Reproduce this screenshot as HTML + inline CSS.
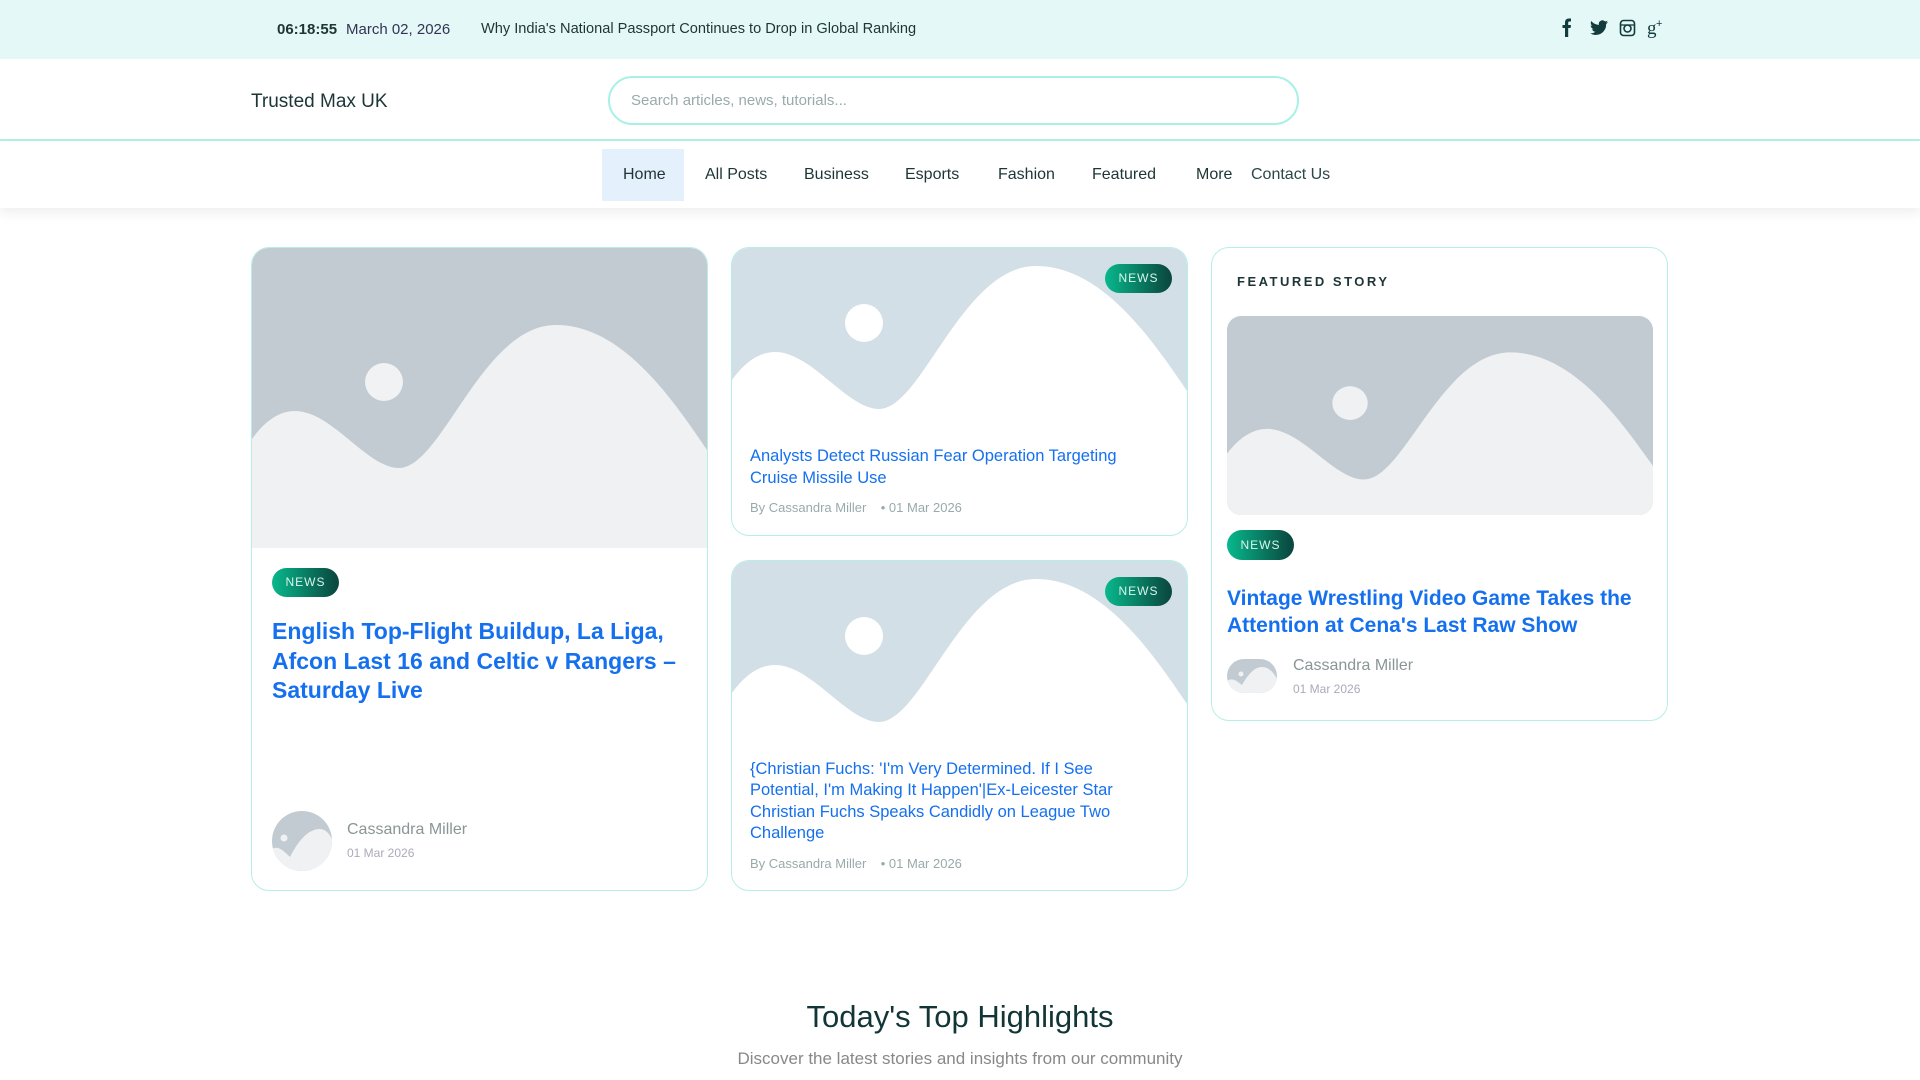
<!DOCTYPE html>
<html><head><meta charset="utf-8"><style>
*{box-sizing:border-box;margin:0;padding:0}
body{width:1920px;height:1080px;overflow:hidden;background:#fff;font-family:"Liberation Sans",sans-serif;color:#123;position:relative}
.a{position:absolute}
.top{left:0;top:0;width:1920px;height:59px;background:#e4f8f7}
.top span{position:absolute;top:21px;font-size:15px;color:#1e3535}
.hdr{top:59px;left:0;width:1920px;height:82px;border-bottom:2px solid #aef0e6}
.nav{top:142px;left:0;width:1920px;height:66px;background:#fff;box-shadow:0 6px 10px rgba(0,0,0,.06)}
.nav span{position:absolute;top:24px;font-size:16px;color:#1e3535}
.card{border:1.5px solid #b5efe6;border-radius:18px;overflow:hidden;background:#fff}
.pill{position:absolute;height:29px;width:67px;border-radius:15px;background:linear-gradient(90deg,#08b88c,#0a4a40 95%);color:#d8f5ee;font-size:12px;letter-spacing:1px;text-align:center;line-height:29px}
.t{position:absolute;color:#1570ef;font-weight:bold}
.meta{position:absolute;font-size:13px;color:#9aa}
</style></head><body>
<div class="a top">
<span style="left:277px;font-weight:bold">06:18:55</span>
<span style="left:346px;color:#335">March 02, 2026</span>
<span style="left:481px;font-size:14.6px">Why India's National Passport Continues to Drop in Global Ranking</span>
<svg class="a" style="left:1560px;top:17px" width="110" height="22" viewBox="0 0 110 22" fill="#123b3b">
<path d="M5 20V11H2.5V8H5V5.5C5 3 6.5 1.5 8.8 1.5H11V4.5H9.3C8.5 4.5 8.2 5 8.2 5.7V8H11L10.6 11H8.2V20Z"/>
<path d="M48 5c-.7.3-1.4.5-2.1.6.8-.5 1.3-1.2 1.6-2-.7.4-1.5.7-2.3.9a3.7 3.7 0 0 0-6.3 3.4c-3.1-.2-5.8-1.600-7.6-3.9-1 1.7-.5 3.8 1.1 4.9-.6 0-1.2-.2-1.7-.5 0 1.8 1.3 3.3 3 3.7-.5.2-1.1.2-1.7.1.5 1.5 1.9 2.5 3.5 2.6A7.4 7.4 0 0 1 30 16.3a10.5 10.5 0 0 0 16.2-9.3c.7-.5 1.3-1.2 1.8-2z"/>
<rect x="60.5" y="3.5" width="14" height="15" rx="3" fill="none" stroke="#123b3b" stroke-width="1.6"/><circle cx="67.5" cy="11.5" r="3.5" fill="none" stroke="#123b3b" stroke-width="1.6"/><line x1="61" y1="8" x2="74" y2="8" stroke="#123b3b" stroke-width="1.3"/>
<text x="87" y="17" font-size="19" font-family="Liberation Serif" fill="#123b3b">g</text><text x="96" y="10" font-size="11" fill="#123b3b">+</text>
</svg>
</div>
<div class="a hdr">
<div class="a" style="left:251px;top:32px;font-size:19px;color:#1e3535">Trusted Max UK</div>
<div class="a" style="left:608px;top:17px;width:691px;height:49px;border:2px solid #a8f1e6;border-radius:25px;padding-left:21px;line-height:45px;font-size:15px;color:#9aa">Search articles, news, tutorials...</div>
</div>
<div class="a nav">
<div class="a" style="left:602px;top:7px;width:82px;height:52px;background:#e4f0fc"></div>
<span style="left:623px">Home</span><span style="left:705px">All Posts</span><span style="left:804px">Business</span><span style="left:905px">Esports</span><span style="left:998px">Fashion</span><span style="left:1092px">Featured</span><span style="left:1196px">More</span><span style="left:1251px;color:#2b4848">Contact Us</span>
</div>

<div class="a card" style="left:251px;top:247px;width:457px;height:644px">
<svg class="a" style="left:0;top:0" width="457" height="300" viewBox="0 0 457 300" preserveAspectRatio="none"><rect width="457" height="300" fill="#c2cbd2"/><circle cx="132" cy="134" r="19" fill="#f0f2f4"/><path d="M0 191C15 170 30 163 43 163C80 163 115 220 147 220C190 220 230 77 304 77C370 77 420 150 457 205L457 300L0 300Z" fill="#eff1f3"/></svg>
<div class="pill" style="left:20px;top:320px">NEWS</div>
<div class="t" style="left:20px;top:369px;width:410px;font-size:23px;line-height:29.5px">English Top-Flight Buildup, La Liga, Afcon Last 16 and Celtic v Rangers – Saturday Live</div>
<svg class="a" style="left:20px;top:563px" width="60" height="60" viewBox="0 0 60 60"><defs><clipPath id="c1"><circle cx="30" cy="30" r="30"/></clipPath></defs><g clip-path="url(#c1)"><rect width="60" height="60" fill="#c2cbd2"/><path d="M0 38C6 34 12 40 18 46C26 30 36 18 48 18C54 18 58 24 60 28V60H0Z" fill="#eff1f3"/><circle cx="12" cy="27" r="3.5" fill="#eff1f3"/></g></svg>
<div class="a" style="left:95px;top:573px;font-size:16px;color:#8a9595">Cassandra Miller</div>
<div class="meta" style="left:95px;top:598px;font-size:12px;color:#aab">01 Mar 2026</div>
</div>

<div class="a card" style="left:731px;top:247px;width:457px;height:289px">
<svg class="a" style="left:0;top:0" width="457" height="180" viewBox="0 59 457 180" preserveAspectRatio="none"><rect y="59" width="457" height="180" fill="#d3dfe7"/><circle cx="132" cy="134" r="19" fill="#fff"/><path d="M0 191C15 170 30 163 43 163C80 163 115 220 147 220C190 220 230 77 304 77C370 77 420 150 457 205L457 300L0 300Z" fill="#fff"/></svg>
<div class="pill" style="left:373px;top:16px">NEWS</div>
<div class="t" style="left:18px;top:198px;width:400px;font-size:16.5px;line-height:21.5px;font-weight:normal">Analysts Detect Russian Fear Operation Targeting Cruise Missile Use</div>
<div class="meta" style="left:18px;top:252px">By Cassandra Miller &nbsp;&nbsp; • 01 Mar 2026</div>
</div>

<div class="a card" style="left:731px;top:560px;width:457px;height:331px">
<svg class="a" style="left:0;top:0" width="457" height="180" viewBox="0 59 457 180" preserveAspectRatio="none"><rect y="59" width="457" height="180" fill="#d3dfe7"/><circle cx="132" cy="134" r="19" fill="#fff"/><path d="M0 191C15 170 30 163 43 163C80 163 115 220 147 220C190 220 230 77 304 77C370 77 420 150 457 205L457 300L0 300Z" fill="#fff"/></svg>
<div class="pill" style="left:373px;top:16px">NEWS</div>
<div class="t" style="left:18px;top:198px;width:390px;font-size:16.5px;line-height:21.3px;font-weight:normal">{Christian Fuchs: 'I'm Very Determined. If I See Potential, I'm Making It Happen'|Ex-Leicester Star Christian Fuchs Speaks Candidly on League Two Challenge</div>
<div class="meta" style="left:18px;top:295px">By Cassandra Miller &nbsp;&nbsp; • 01 Mar 2026</div>
</div>

<div class="a card" style="left:1211px;top:247px;width:457px;height:474px">
<div class="a" style="left:25px;top:26px;font-size:13px;letter-spacing:2.5px;color:#1e3535;font-weight:bold">FEATURED STORY</div>
<svg class="a" style="left:15px;top:68px;border-radius:14px" width="426" height="199" viewBox="0 36 457 224" preserveAspectRatio="none"><rect y="36" width="457" height="224" fill="#c2cbd2"/><ellipse cx="132" cy="134" rx="19" ry="19" fill="#eff1f3"/><path d="M0 191C15 170 30 163 43 163C80 163 115 220 147 220C190 220 230 77 304 77C370 77 420 150 457 205L457 300L0 300Z" fill="#eff1f3"/></svg>
<div class="pill" style="left:15px;top:282px;height:30px;line-height:30px">NEWS</div>
<div class="t" style="left:15px;top:337px;width:430px;font-size:21px;line-height:27px">Vintage Wrestling Video Game Takes the Attention at Cena's Last Raw Show</div>
<svg class="a" style="left:15px;top:411px;border-radius:17px" width="50" height="34" viewBox="0 0 50 34"><rect width="50" height="34" fill="#c2cbd2"/><path d="M0 22C5 18 10 22 15 26C22 14 28 8 35 8C42 8 47 14 50 20V34H0Z" fill="#eff1f3"/><circle cx="14" cy="15" r="2.5" fill="#eff1f3"/></svg>
<div class="a" style="left:81px;top:409px;font-size:16px;color:#8a9595">Cassandra Miller</div>
<div class="meta" style="left:81px;top:434px;font-size:12px;color:#aab">01 Mar 2026</div>
</div>

<div class="a" style="left:0;top:999px;width:1920px;text-align:center;font-size:31px;color:#123535">Today's Top Highlights</div>
<div class="a" style="left:0;top:1049px;width:1920px;text-align:center;font-size:17px;color:#888">Discover the latest stories and insights from our community</div>
</body></html>
